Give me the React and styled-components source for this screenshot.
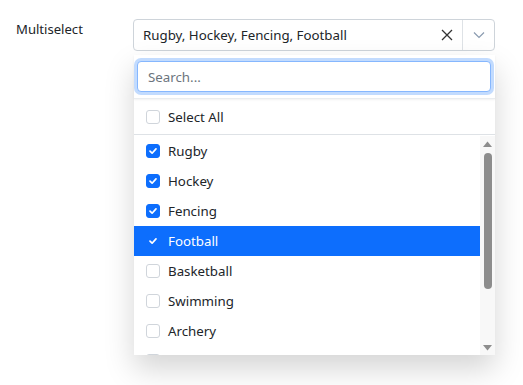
import React from 'react';
import styled, { createGlobalStyle } from 'styled-components';

const GlobalStyle = createGlobalStyle`
  html, body {
    margin: 0;
    padding: 0;
    background: #fff;
    font-family: "Segoe UI", "Noto Sans", sans-serif;
    color: #212529;
  }
`;

const Page = styled.div`
  display: flex;
  align-items: flex-start;
  padding: 19px 0 0 16px;
  height: 366px;
`;

const Label = styled.div`
  width: 117px;
  font-size: 13.1px;
  line-height: 20px;
`;

const Field = styled.div`
  position: relative;
  width: 362px;
`;

const SelectBox = styled.div`
  display: flex;
  align-items: center;
  height: 32px;
  box-sizing: border-box;
  border: 1px solid #ced4da;
  border-radius: 4px;
  background: #fff;
  font-size: 13.3px;
`;

const Value = styled.div`
  flex: 1;
  padding-left: 9px;
  white-space: nowrap;
  overflow: hidden;
`;

const ClearBtn = styled.div`
  width: 30px;
  display: flex;
  align-items: center;
  justify-content: center;
`;

const Toggle = styled.div`
  width: 31px;
  height: 30px;
  display: flex;
  align-items: center;
  justify-content: center;
  border-left: 1px solid #dee2e6;
`;

const Panel = styled.div`
  position: absolute;
  top: 36px;
  left: 1px;
  right: 0;
  background: #fff;
  box-shadow: 0 14px 28px rgba(0, 0, 0, 0.17);
  z-index: 5;
`;

const SearchWrap = styled.div`
  padding: 6px 4px 6px 3px;
  border-bottom: 1px solid #e9ecef;
  box-shadow: 0 1px 2px rgba(0, 0, 0, 0.06);
`;

const SearchInput = styled.input`
  display: block;
  width: 100%;
  box-sizing: border-box;
  height: 31px;
  border: 1px solid #86b7fe;
  border-radius: 4px;
  outline: none;
  box-shadow: 0 0 0 3px rgba(13, 110, 253, 0.25);
  padding: 0 10px;
  font-family: inherit;
  font-size: 13.3px;
  color: #212529;
  &::placeholder {
    color: #6c757d;
  }
`;

const SelectAllRow = styled.div`
  display: flex;
  align-items: center;
  height: 35px;
  padding-left: 12px;
  border-bottom: 1px solid #dee2e6;
  font-size: 13.3px;
`;

const ListArea = styled.div`
  display: flex;
  height: 219px;
  padding-top: 1px;
`;

const Items = styled.div`
  flex: 1;
  overflow: hidden;
`;

const Option = styled.div`
  display: flex;
  align-items: center;
  height: 30px;
  padding-left: 12px;
  font-size: 13.3px;
  background: ${p => (p.$active ? '#0d6efd' : 'transparent')};
  color: ${p => (p.$active ? '#fff' : '#212529')};
`;

const Box = styled.span`
  width: 14px;
  height: 14px;
  box-sizing: border-box;
  margin-right: 8px;
  border-radius: 3px;
  display: flex;
  align-items: center;
  justify-content: center;
  border: 1px solid ${p => (p.$checked ? '#0d6efd' : '#d0d5db')};
  background: ${p => (p.$checked ? '#0d6efd' : '#fff')};
`;

const ScrollBar = styled.div`
  width: 15px;
  background: #f8f8f8;
  display: flex;
  flex-direction: column;
  align-items: center;
`;

const ScrollArrow = styled.div`
  height: 15px;
  display: flex;
  align-items: center;
  justify-content: center;
`;

const ScrollTrack = styled.div`
  flex: 1;
  width: 100%;
  display: flex;
  justify-content: center;
  padding-top: 2px;
`;

const Thumb = styled.div`
  width: 8px;
  height: 136px;
  border-radius: 4px;
  background: #8d8d8d;
`;

const Check = () => (
  <svg width="10" height="10" viewBox="0 0 10 10">
    <path d="M2 5.2 L4.1 7.2 L8 2.9" fill="none" stroke="#fff" strokeWidth="1.7" strokeLinecap="round" strokeLinejoin="round" />
  </svg>
);

const sports = [
  { name: 'Rugby', checked: true },
  { name: 'Hockey', checked: true },
  { name: 'Fencing', checked: true },
  { name: 'Football', checked: true, active: true },
  { name: 'Basketball' },
  { name: 'Swimming' },
  { name: 'Archery' },
  { name: 'Cycling' },
];

export default function App() {
  return (
    <>
      <GlobalStyle />
      <Page>
        <Label>Multiselect</Label>
        <Field>
          <SelectBox>
            <Value>Rugby, Hockey, Fencing, Football</Value>
            <ClearBtn>
              <svg width="12" height="12" viewBox="0 0 12 12">
                <path d="M1 1 L11 11 M11 1 L1 11" stroke="#333" strokeWidth="1.3" />
              </svg>
            </ClearBtn>
            <Toggle>
              <svg width="12" height="8" viewBox="0 0 12 8">
                <path d="M1 1.5 L6 6.5 L11 1.5" fill="none" stroke="#8a9bb0" strokeWidth="1.2" />
              </svg>
            </Toggle>
          </SelectBox>
          <Panel>
            <SearchWrap>
              <SearchInput placeholder="Search..." autoFocus />
            </SearchWrap>
            <SelectAllRow>
              <Box />
              Select All
            </SelectAllRow>
            <ListArea>
              <Items>
                {sports.map(s => (
                  <Option key={s.name} $active={s.active}>
                    <Box $checked={s.checked}>{s.checked && <Check />}</Box>
                    {s.name}
                  </Option>
                ))}
              </Items>
              <ScrollBar>
                <ScrollArrow>
                  <svg width="9" height="6" viewBox="0 0 9 6"><path d="M0 6 L4.5 0.5 L9 6 Z" fill="#8d8d8d" /></svg>
                </ScrollArrow>
                <ScrollTrack>
                  <Thumb />
                </ScrollTrack>
                <ScrollArrow>
                  <svg width="9" height="6" viewBox="0 0 9 6"><path d="M0 0 L4.5 5.5 L9 0 Z" fill="#8d8d8d" /></svg>
                </ScrollArrow>
              </ScrollBar>
            </ListArea>
          </Panel>
        </Field>
      </Page>
    </>
  );
}
